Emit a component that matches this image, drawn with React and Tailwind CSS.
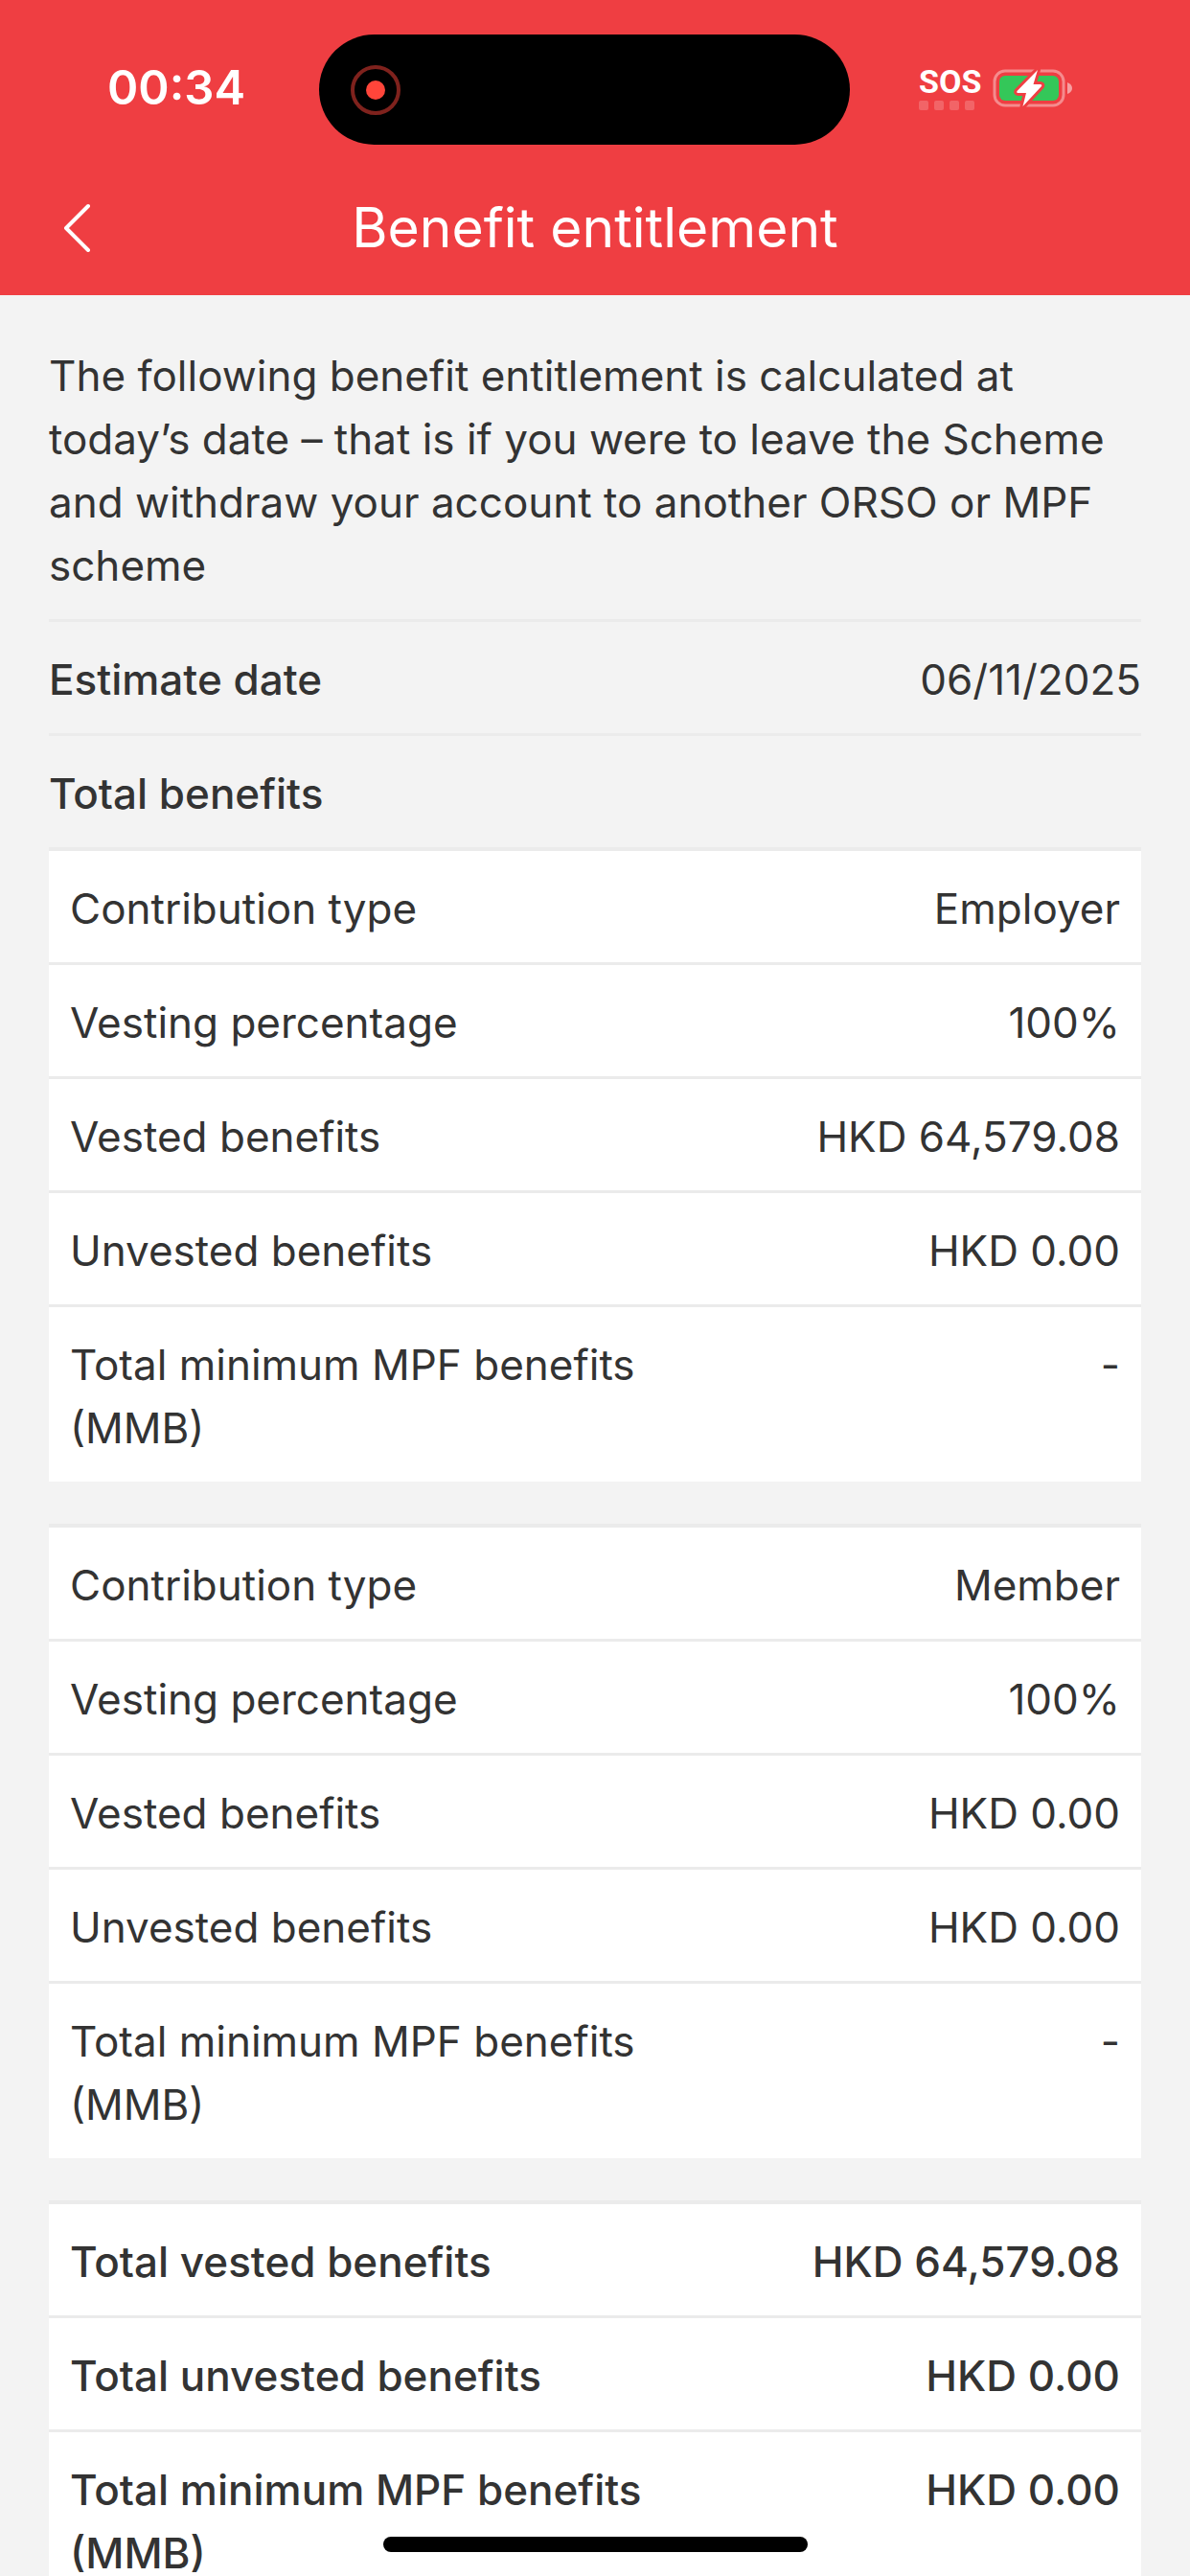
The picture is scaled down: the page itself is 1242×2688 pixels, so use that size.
import clsx from "clsx";

const INTRO =
  "The following benefit entitlement is calculated at today’s date – that is if you were to leave the Scheme and withdraw your account to another ORSO or MPF scheme";

const CONTRIBUTIONS = [
  {
    id: "employer",
    rows: [
      { label: "Contribution type", value: "Employer" },
      { label: "Vesting percentage", value: "100%" },
      { label: "Vested benefits", value: "HKD 64,579.08" },
      { label: "Unvested benefits", value: "HKD 0.00" },
      { label: "Total minimum MPF benefits (MMB)", value: "-" },
    ],
  },
  {
    id: "member",
    rows: [
      { label: "Contribution type", value: "Member" },
      { label: "Vesting percentage", value: "100%" },
      { label: "Vested benefits", value: "HKD 0.00" },
      { label: "Unvested benefits", value: "HKD 0.00" },
      { label: "Total minimum MPF benefits (MMB)", value: "-" },
    ],
  },
  {
    id: "total",
    strong: true,
    rows: [
      { label: "Total vested benefits", value: "HKD 64,579.08" },
      { label: "Total unvested benefits", value: "HKD 0.00" },
      { label: "Total minimum MPF benefits (MMB)", value: "HKD 0.00" },
    ],
  },
];

function BatteryIcon() {
  const bolt = "M47 2 L25.5 24 Q24.5 26 27 26 H35 L31.5 40 L51 19 Q52 17 49.5 17 H42.5 Z";
  return (
    <svg width="84" height="42" viewBox="0 0 84 42" aria-hidden="true">
      <rect x="2" y="3" width="72" height="36" rx="11" fill="none" stroke="#fff" strokeOpacity="0.4" strokeWidth="3" />
      <path d="M78 15 Q83 17 83 21 Q83 25 78 27 Z" fill="#fff" fillOpacity="0.5" />
      <rect x="7" y="8" width="62" height="26" rx="6" fill="#34c759" />
      {/* red outline cuts the bolt out of the battery body */}
      <path d={bolt} fill="#ef3e42" stroke="#ef3e42" strokeWidth="6" strokeLinejoin="round" />
      <path d={bolt} fill="#fff" />
    </svg>
  );
}

function StatusBar() {
  return (
    <div className="grid h-[115px] grid-cols-[333fr_554fr_355fr] items-center">
      <div className="pb-1 pl-[112px] text-[49px] leading-none font-semibold">00:34</div>
      <div className="flex h-full items-center rounded-full bg-black pl-[33px]">
        <svg width="52" height="52" viewBox="0 0 52 52" aria-hidden="true">
          <circle cx="26" cy="26" r="24" fill="none" stroke="#7f221d" strokeWidth="4" />
          <circle cx="26" cy="26" r="10" fill="#ff453a" />
        </svg>
      </div>
      <div className="flex items-center gap-3 pb-1 pl-[72px]">
        <div className="flex flex-col gap-1">
          <span className="font-['Roboto',sans-serif] text-[34px] leading-8 font-bold">SOS</span>
          <div className="flex w-[58px] justify-between">
            {[0, 1, 2, 3].map((i) => (
              <span key={i} className="size-[10px] rounded-xs bg-white/20" />
            ))}
          </div>
        </div>
        <BatteryIcon />
      </div>
    </div>
  );
}

function Header() {
  return (
    <header className="shrink-0 bg-[#ef3e42] pt-9 text-white">
      <StatusBar />
      <div className="mt-[15px] grid h-[142px] grid-cols-[160px_1fr_160px] items-center">
        <button type="button" aria-label="Back" className="flex h-full items-center pl-[65px]">
          <svg width="30" height="52" viewBox="0 0 30 52" fill="none" aria-hidden="true">
            <path d="M27 4 L4 27 L27 50" stroke="#fff" strokeWidth="4" strokeLinecap="round" strokeLinejoin="round" />
          </svg>
        </button>
        <h1 className="text-center text-[57px] leading-none">Benefit entitlement</h1>
      </div>
    </header>
  );
}

function Row({ label, value, strong }) {
  return (
    <div
      className={clsx(
        "flex justify-between border-t-3 border-[#ebebeb] px-[22px] pt-[27px] pb-[23px] first:border-t-4",
        strong && "font-medium"
      )}
    >
      <dt className="w-3/5">{label}</dt>
      <dd className="text-right">{value}</dd>
    </div>
  );
}

export default function App() {
  return (
    <div className="flex h-screen flex-col bg-[#f3f3f3] font-['Inter',sans-serif] text-[#333]">
      <Header />

      <main className="min-h-0 flex-1 overflow-y-auto px-[51px] pt-[51px] text-[44px] leading-[66px] [scrollbar-width:none]">
        <p className="pb-[23px]">{INTRO}</p>

        <dl className="flex justify-between border-y-3 border-[#ebebeb] pt-[27px] pb-[23px]">
          <dt className="font-medium">Estimate date</dt>
          <dd>06/11/2025</dd>
        </dl>

        <h2 className="pt-[27px] pb-[23px] font-medium">Total benefits</h2>

        <div className="flex flex-col gap-11 pb-11">
          {CONTRIBUTIONS.map((c) => (
            <dl key={c.id} className="bg-white">
              {c.rows.map((r) => (
                <Row key={r.label} {...r} strong={c.strong} />
              ))}
            </dl>
          ))}
        </div>
      </main>

      {/* home indicator */}
      <div className="fixed inset-x-0 bottom-[25px] mx-auto h-4 w-[443px] rounded-full bg-black" />
    </div>
  );
}
